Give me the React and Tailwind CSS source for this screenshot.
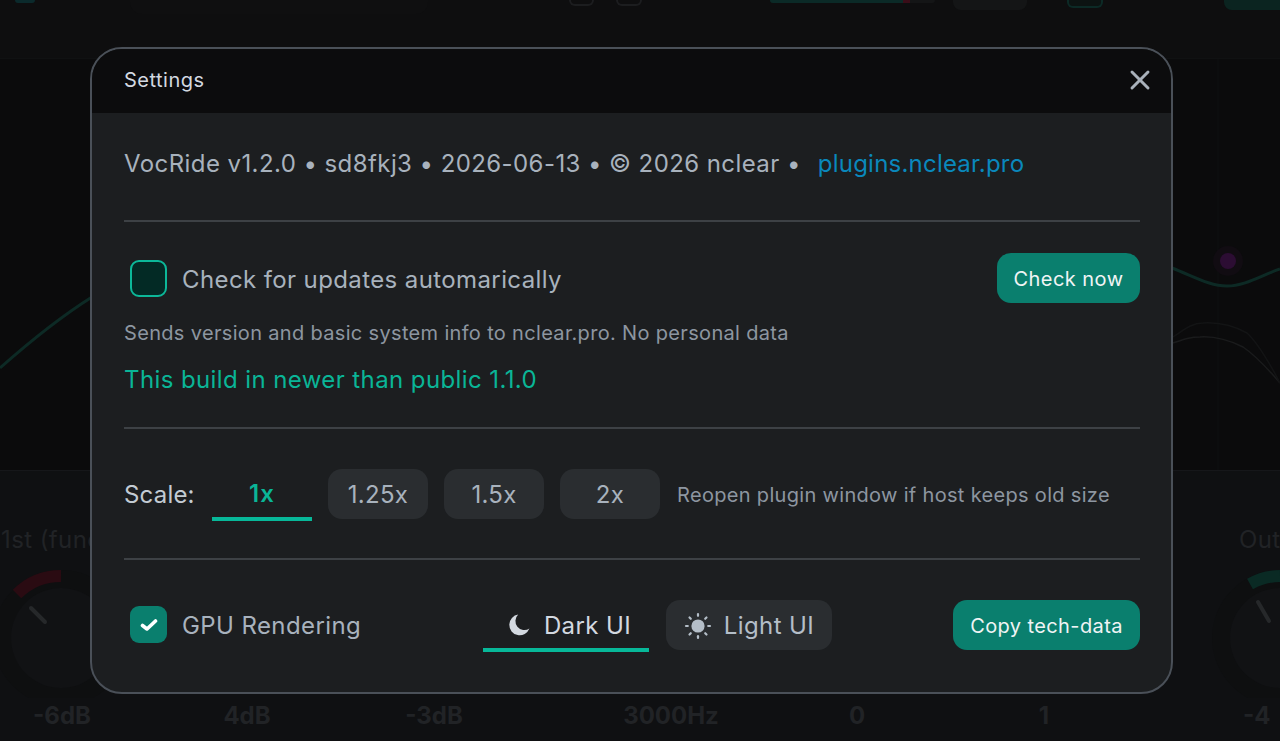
import React from "react";
import { X } from "lucide-react";

function Moon() {
  return (
    <svg width="24" height="24" viewBox="0 0 24 24" className="-mt-[3px] shrink-0">
      <path d="M11.2 1.6 A10.4 10.4 0 1 0 22.4 15.6 A9 9 0 0 1 11.2 1.6 Z" fill="#d3d9e0" />
    </svg>
  );
}

function Sun() {
  const rays = [0, 45, 90, 135, 180, 225, 270, 315];
  return (
    <svg width="28" height="28" viewBox="0 0 28 28" className="shrink-0">
      <circle cx="14" cy="14" r="6.6" fill="#b4bec8" />
      {rays.map((r) => (
        <line key={r} x1="14" y1="2" x2="14" y2="3.8" stroke="#b4bec8" strokeWidth="2.2" strokeLinecap="round" transform={`rotate(${r} 14 14)`} />
      ))}
    </svg>
  );
}

function Background() {
  const values = [
    ["w-[124px]", "-6dB"],
    ["w-[246px]", "4dB"],
    ["w-[128px]", "-3dB"],
    ["w-[346px]", "3000Hz"],
    ["w-[26px]", "0"],
    ["w-[348px]", "1"],
  ];
  return (
    <div className="flex h-[741px] w-[1280px] flex-col overflow-hidden bg-[#0e0e0f]">
      <div className="flex h-[59px] shrink-0 items-start border-b border-[#101112]">
        <div className="ml-[15px] h-[3px] w-[20px] rounded-b bg-[#0b2a2c]" />
        <div className="ml-[95px] h-[14px] w-[298px] rounded-b-xl bg-[#0f0f10]" />
        <div className="ml-[141px] h-[6px] w-[25px] rounded-b-md border-x-2 border-b-2 border-[#1c1d1f]" />
        <div className="ml-[22px] h-[6px] w-[26px] rounded-b-md border-x-2 border-b-2 border-[#1c1d1f]" />
        <div className="ml-[128px] flex h-[3px] w-[165px] overflow-hidden rounded-b bg-[#141516]">
          <div className="h-full w-[133px] bg-[#0b2a27]" />
          <div className="h-full w-[7px] bg-[#3a0d18]" />
        </div>
        <div className="ml-[18px] h-[10px] w-[74px] rounded-b-lg bg-[#141516]" />
        <div className="ml-[40px] h-[8px] w-[36px] rounded-b-md border-x-2 border-b-2 border-[#0c2a26] bg-[#0c1312]" />
        <div className="ml-[121px] h-[10px] w-[56px] rounded-bl-lg bg-[#0b2420]" />
      </div>
      <div className="h-[411px] shrink-0 bg-[#0b0b0c]">
        <svg width="1280" height="411" viewBox="0 0 1280 411" className="block">
          <path d="M0 309 C35 278 65 255 92 238" fill="none" stroke="#0d2a25" strokeWidth="3" />
          <line x1="1218" y1="0" x2="1218" y2="411" stroke="#0f1011" strokeWidth="1" />
          <path d="M1172 209 C1195 218 1210 227 1227 227 C1245 227 1262 216 1280 210" fill="none" stroke="#0d2a25" strokeWidth="3" />
          <path d="M1173 284 C1185 280 1190 278 1200 278 C1215 277 1232 282 1243 288 C1255 296 1268 310 1280 324" fill="none" stroke="#1a1b1c" strokeWidth="1.5" />
          <path d="M1173 278 C1185 270 1192 264 1203 264 C1220 263 1236 268 1247 274 C1258 284 1270 305 1280 324" fill="none" stroke="#131415" strokeWidth="1.5" />
          <circle cx="1228" cy="202" r="15" fill="#110c12" />
          <circle cx="1228" cy="202" r="8" fill="#2c0d33" />
        </svg>
      </div>
      <div className="flex min-h-0 flex-1 flex-col border-t border-[#16171a] bg-[#0f1012]">
        <div className="flex h-[87px] shrink-0 items-end justify-between pl-[1px]">
          <span className="text-[24px] leading-[36px] tracking-[0.4px] text-[#212326]">1st (fund)</span>
          <span className="w-[41px] text-[24px] leading-[36px] tracking-[0.4px] whitespace-nowrap text-[#212326]">Out</span>
        </div>
        <div className="flex h-[140px] shrink-0 justify-between">
          <svg width="134" height="140" viewBox="0 0 134 140" className="shrink-0">
            <circle cx="61" cy="80" r="68" fill="#0e0f10" />
            <circle cx="61" cy="80" r="50" fill="#111214" />
            <path d="M17 36 A62 62 0 0 1 61 18" fill="none" stroke="#2a0b12" strokeWidth="12" />
            <line x1="31" y1="50" x2="45" y2="64" stroke="#26282a" strokeWidth="4" strokeLinecap="round" />
          </svg>
          <svg width="104" height="140" viewBox="0 0 104 140" className="shrink-0">
            <circle cx="104" cy="80" r="68" fill="#0e0f10" />
            <circle cx="104" cy="80" r="50" fill="#111214" />
            <path d="M74 26 A62 62 0 0 1 104 18" fill="none" stroke="#0a2a24" strokeWidth="12" />
            <line x1="82" y1="44" x2="93" y2="63" stroke="#26282a" strokeWidth="4" strokeLinecap="round" />
          </svg>
        </div>
        <div className="flex items-center">
          {values.map(([w, v]) => (
            <div key={v} className={`${w} shrink-0 text-center text-[24px] leading-[36px] font-bold text-[#212326]`}>
              {v}
            </div>
          ))}
          <div className="ml-[25px] text-[24px] leading-[36px] font-bold text-[#212326]">-4</div>
        </div>
      </div>
    </div>
  );
}

function Divider() {
  return <div className="h-[2px] bg-[#3d4145]" />;
}

function Pill({ children }) {
  return (
    <button className="flex h-[50px] w-[100px] items-center justify-center rounded-[14px] bg-[#2a2d30] pt-[2px] text-[24px] tracking-[0.3px] text-[#a8b2bd]">
      {children}
    </button>
  );
}

export default function App() {
  return (
    <div className="relative h-[741px] w-[1280px] overflow-hidden bg-[#0c0c0d] [font-family:Inter,sans-serif]">
      <Background />
      <div className="absolute inset-0 flex items-start pt-[47px] pl-[90px]">
        <div className="flex h-[647px] w-[1083px] flex-col overflow-hidden rounded-[32px] border-2 border-[#4a5058] bg-[#1c1e20]">
          <div className="flex h-[64px] shrink-0 items-center justify-between bg-[#0c0c0d] pr-[15px] pb-[2px] pl-[32px]">
            <span className="text-[20px] tracking-[0.5px] text-[#d3d9e0]">Settings</span>
            <X size={32} strokeWidth={2.2} color="#a9b1ba" />
          </div>
          <div className="flex flex-1 flex-col pr-[31px] pl-[32px]">
            <div className="flex h-[72px] shrink-0 items-end pb-[3px] text-[24px] leading-[36px] tracking-[0.42px] whitespace-nowrap text-[#a8b2bd]">
              <span>VocRide v1.2.0 • sd8fkj3 • 2026-06-13 • © 2026 nclear •</span>
              <span className="ml-[17px] tracking-[0.22px] text-[#0a88bc]">plugins.nclear.pro</span>
            </div>
            <div className="mt-[35px]"><Divider /></div>
            <div className="mt-[31px] flex h-[50px] items-center justify-between">
              <div className="flex items-center">
                <div className="ml-[6px] h-[37px] w-[37px] rounded-[9px] border-2 border-[#0cb899] bg-[#032a25]" />
                <span className="ml-[15px] pt-[3px] text-[24px] tracking-[0.39px] text-[#a8b2bd]">Check for updates automarically</span>
              </div>
              <button className="h-[50px] w-[143px] rounded-[14px] bg-[#0a7f6e] pt-[1px] text-[20px] tracking-[0.44px] text-[#f0f4f5]">Check now</button>
            </div>
            <p className="mt-[15px] text-[20px] leading-[30px] tracking-[0.33px] text-[#8d96a0]">Sends version and basic system info to nclear.pro. No personal data</p>
            <p className="mt-[14px] text-[24px] leading-[36px] tracking-[0.4px] text-[#0ab597]">This build in newer than public 1.1.0</p>
            <div className="mt-[29px]"><Divider /></div>
            <div className="mt-[40px] flex h-[50px] items-start">
              <span className="flex h-[50px] w-[88px] items-center pt-[2px] text-[24px] tracking-[0.2px] text-[#c3cbd3]">Scale:</span>
              <button className="flex h-[52px] w-[100px] shrink-0 items-center justify-center border-b-[4px] border-[#07b899] pt-[2px] text-[24px] font-semibold tracking-[1px] text-[#0ab597]">1x</button>
              <div className="ml-[16px] flex gap-[16px]">
                <Pill>1.25x</Pill>
                <Pill>1.5x</Pill>
                <Pill>2x</Pill>
              </div>
              <span className="ml-[17px] flex h-[50px] items-center pt-[1px] text-[20px] tracking-[0.32px] whitespace-nowrap text-[#8d96a0]">Reopen plugin window if host keeps old size</span>
            </div>
            <div className="mt-[39px]"><Divider /></div>
            <div className="mt-[40px] flex h-[50px] items-start">
              <div className="mt-[6px] ml-[6px] flex h-[37px] w-[37px] shrink-0 items-center justify-center rounded-[9px] bg-[#0a7f6e]">
                <svg width="18" height="14" viewBox="0 0 18 14">
                  <path d="M2.5 7.5 L7 11 L15.5 3" fill="none" stroke="#ffffff" strokeWidth="3.6" strokeLinecap="round" strokeLinejoin="round" />
                </svg>
              </div>
              <span className="ml-[15px] flex h-[50px] w-[301px] items-center pt-[2px] text-[24px] tracking-[0.4px] text-[#a8b2bd]">GPU Rendering</span>
              <button className="flex h-[52px] w-[166px] shrink-0 items-center justify-center gap-[13px] border-b-[4px] border-[#07b899] pt-[4px] pl-[6px] text-[24px] tracking-[0.4px] text-[#d3d9e0]">
                <Moon />
                <span>Dark UI</span>
              </button>
              <button className="ml-[17px] flex h-[50px] w-[166px] shrink-0 items-center justify-center gap-[12px] rounded-[14px] bg-[#2a2d30] pt-[2px] text-[24px] tracking-[0.4px] text-[#b4bec8]">
                <Sun />
                <span>Light UI</span>
              </button>
              <button className="ml-auto h-[50px] w-[187px] rounded-[14px] bg-[#0a7f6e] pt-[2px] text-[20px] tracking-[0.4px] text-[#f0f4f5]">Copy tech-data</button>
            </div>
          </div>
        </div>
      </div>
    </div>
  );
}
